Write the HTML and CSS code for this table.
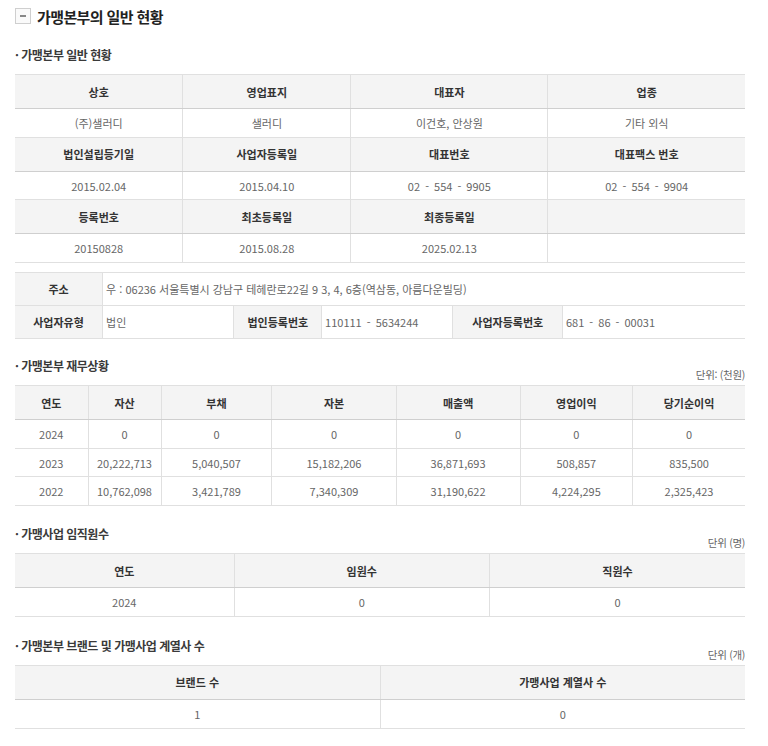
FILE: index.html
```html
<!DOCTYPE html>
<html lang="ko">
<head>
<meta charset="utf-8">
<title>가맹본부의 일반 현황</title>
<link rel="stylesheet" href="styles.css">
</head>
<body>
<div class="page">
  <h2 class="title">
    <span class="title-icon"><span class="dash"></span></span>
    <span>가맹본부의 일반 현황</span>
  </h2>

  <div class="sec-head"><h3 class="sub">· 가맹본부 일반 현황</h3></div>
  <table class="tbl">
    <colgroup><col style="width:23%"><col style="width:23%"><col style="width:27%"><col style="width:27%"></colgroup>
    <tr><th>상호</th><th>영업표지</th><th>대표자</th><th>업종</th></tr>
    <tr><td>(주)샐러디</td><td>샐러디</td><td>이건호, 안상원</td><td>기타 외식</td></tr>
    <tr><th>법인설립등기일</th><th>사업자등록일</th><th>대표번호</th><th>대표팩스 번호</th></tr>
    <tr><td>2015.02.04</td><td>2015.04.10</td><td class="ph">02 - 554 - 9905</td><td class="ph">02 - 554 - 9904</td></tr>
    <tr><th>등록번호</th><th>최초등록일</th><th>최종등록일</th><th></th></tr>
    <tr><td>20150828</td><td>2015.08.28</td><td>2025.02.13</td><td></td></tr>
  </table>

  <table class="tbl addr">
    <colgroup><col style="width:12%"><col style="width:18%"><col style="width:12%"><col style="width:18%"><col style="width:15%"><col style="width:25%"></colgroup>
    <tr><th>주소</th><td class="left" colspan="5">우 : 06236 서울특별시 강남구 테헤란로22길 9 3, 4, 6층(역삼동, 아름다운빌딩)</td></tr>
    <tr><th>사업자유형</th><td class="left">법인</td><th>법인등록번호</th><td class="left ph">110111 - 5634244</td><th>사업자등록번호</th><td class="left ph">681 - 86 - 00031</td></tr>
  </table>

  <div class="sec-head fin"><h3 class="sub">· 가맹본부 재무상황</h3><span class="unit">단위: (천원)</span></div>
  <table class="tbl">
    <colgroup><col style="width:10%"><col style="width:10%"><col style="width:15.2%"><col style="width:17%"><col style="width:17%"><col style="width:15.4%"><col style="width:15.4%"></colgroup>
    <tr><th>연도</th><th>자산</th><th>부채</th><th>자본</th><th>매출액</th><th>영업이익</th><th>당기순이익</th></tr>
    <tr><td>2024</td><td>0</td><td>0</td><td>0</td><td>0</td><td>0</td><td>0</td></tr>
    <tr><td>2023</td><td>20,222,713</td><td>5,040,507</td><td>15,182,206</td><td>36,871,693</td><td>508,857</td><td>835,500</td></tr>
    <tr><td>2022</td><td>10,762,098</td><td>3,421,789</td><td>7,340,309</td><td>31,190,622</td><td>4,224,295</td><td>2,325,423</td></tr>
  </table>

  <div class="sec-head emp"><h3 class="sub">· 가맹사업 임직원수</h3><span class="unit">단위 (명)</span></div>
  <table class="tbl">
    <colgroup><col style="width:30%"><col style="width:35%"><col style="width:35%"></colgroup>
    <tr><th>연도</th><th>임원수</th><th>직원수</th></tr>
    <tr><td>2024</td><td>0</td><td>0</td></tr>
  </table>

  <div class="sec-head brand"><h3 class="sub">· 가맹본부 브랜드 및 가맹사업 계열사 수</h3><span class="unit">단위 (개)</span></div>
  <table class="tbl">
    <colgroup><col style="width:50%"><col style="width:50%"></colgroup>
    <tr><th>브랜드 수</th><th>가맹사업 계열사 수</th></tr>
    <tr><td>1</td><td>0</td></tr>
  </table>
</div>
</body>
</html>
```

FILE: styles.css
```css
html, body {
  margin: 0;
  padding: 0;
  background: #fff;
}
body {
  font-family: "Noto Sans CJK KR", "Noto Sans", sans-serif;
  color: #555;
}
.page {
  padding: 0 23px 20px 15px;
}
.title {
  display: flex;
  align-items: center;
  gap: 6px;
  height: 32px;
  margin: 0;
  font-size: 15px;
  font-weight: 700;
  color: #222;
  letter-spacing: -0.6px;
}
.title-icon {
  box-sizing: border-box;
  width: 16px;
  height: 16px;
  border: 1px solid #cfcfcf;
  background: #fafafa;
  display: flex;
  align-items: center;
  justify-content: center;
}
.title-icon .dash {
  width: 6px;
  height: 2px;
  background: #888;
}
.sec-head {
  display: flex;
  justify-content: space-between;
  align-items: flex-end;
  height: 28px;
  margin-top: 14px;
}
.sec-head.fin {
  margin-top: 18px;
}
.sec-head.emp {
  margin-top: 19px;
}
.sec-head.brand {
  margin-top: 20px;
}
.sub {
  margin: 0;
  padding-bottom: 10px;
  font-size: 12px;
  line-height: 18px;
  font-weight: 700;
  color: #3a3a3a;
  letter-spacing: -0.5px;
}
.unit {
  font-size: 10.5px;
  line-height: 14px;
  padding-bottom: 3px;
  color: #666;
  letter-spacing: -0.3px;
}
.tbl {
  width: 100%;
  border-collapse: collapse;
  table-layout: fixed;
  font-size: 11px;
  line-height: 14px;
}
.tbl th, .tbl td {
  border: 1px solid #e0e0e0;
  padding: 0;
  text-align: center;
  vertical-align: middle;
}
.tbl tr > :first-child { border-left: none; }
.tbl tr > :last-child { border-right: none; }
.tbl th {
  height: 33px;
  background: #f4f4f4;
  color: #333;
  font-weight: 700;
  border-bottom-color: #cfcfcf;
}
.tbl td {
  height: 27.7px;
  color: #666;
}
.tbl .ph {
  word-spacing: 2px;
}
.addr {
  margin-top: 9px;
}
.addr th, .addr td {
  height: 32px;
  border-bottom-color: #e0e0e0;
}
.addr td.left {
  text-align: left;
  padding-left: 3px;
}
```
